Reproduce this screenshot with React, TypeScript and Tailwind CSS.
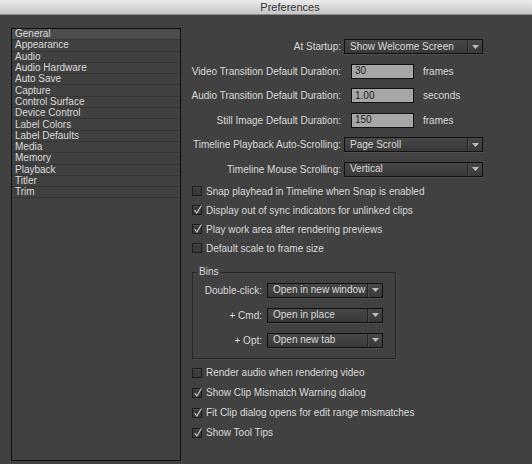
import React from 'react';

const categories = [
  'General',
  'Appearance',
  'Audio',
  'Audio Hardware',
  'Auto Save',
  'Capture',
  'Control Surface',
  'Device Control',
  'Label Colors',
  'Label Defaults',
  'Media',
  'Memory',
  'Playback',
  'Titler',
  'Trim',
];

const Dropdown: React.FC<{ value: string; width: string }> = ({ value, width }) => (
  <div
    className={`flex h-[15px] items-center border border-[#111] bg-gradient-to-b from-[#474747] to-[#393939] shadow-[0_1px_0_#4e4e4e] ${width}`}
  >
    <span className="flex-1 truncate pl-[5px] text-[10px] leading-none text-[#dadada]">{value}</span>
    <span className="h-full w-px bg-[#262626]" />
    <span className="h-full w-px bg-[#4c4c4c]" />
    <span className="flex w-[13px] items-center justify-center">
      <svg width="7" height="4" viewBox="0 0 7 4">
        <path d="M0 0 H7 L3.5 4 Z" fill="#bdbdbd" />
      </svg>
    </span>
  </div>
);

const NumberField: React.FC<{ value: string; unit: string }> = ({ value, unit }) => (
  <div className="ml-[7px] flex items-center">
    <div className="flex h-[15px] w-[63px] items-center border border-[#111] bg-[#a6a6a6] pl-[3px] text-[10px] leading-none text-[#1e1e1e]">
      {value}
    </div>
    <span className="ml-[9px] whitespace-nowrap text-[10px] text-[#dadada]">{unit}</span>
  </div>
);

const Checkbox: React.FC<{ label: string; checked?: boolean; tall?: boolean }> = ({ label, checked, tall }) => (
  <div className={`flex items-center ${tall ? 'h-[20px]' : 'h-[19px]'}`}>
    <div className="relative h-[10px] w-[10px] shrink-0 border border-[#1c1c1c] bg-[#3a3a3a] shadow-[inset_0_1px_0_#4a4a4a]">
      {checked && (
        <svg className="absolute -top-[1px] left-0" width="10" height="10" viewBox="0 0 10 10">
          <path d="M1.5 5 L3.8 8 L8.5 0.5" fill="none" stroke="#c8c8c8" strokeWidth="1.2" />
        </svg>
      )}
    </div>
    <span className="ml-[4px] whitespace-nowrap text-[10px] text-[#dadada]">{label}</span>
  </div>
);

const Label: React.FC<{ children: React.ReactNode }> = ({ children }) => (
  <div className="flex justify-end">
    <span className="whitespace-nowrap text-[10px] text-[#dadada]">{children}</span>
  </div>
);

export default function App() {
  return (
    <div
      className="flex h-[464px] w-[532px] flex-col overflow-hidden bg-[#414141]"
      style={{ fontFamily: '"Liberation Sans", Arial, sans-serif' }}
    >
      <div className="flex h-[15px] shrink-0 items-center justify-center border-b border-[#8c8c8c] bg-gradient-to-b from-[#ececec] to-[#c4c4c4] pl-[48px] text-[11px] leading-none text-[#333]">
        Preferences
      </div>

      <div className="flex flex-1">
        <div className="ml-[11px] mt-[13px] h-[433px] w-[170px] shrink-0 border border-[#0e0e0e] bg-[#404040]">
          {categories.map((c, i) => (
            <div
              key={c}
              className={`flex h-[11.3px] items-center border-b border-[#363636] pl-[3px] text-[10px] leading-none text-[#dadada] ${
                i === 0 ? 'bg-[#4c4c4c]' : ''
              }`}
            >
              {c}
            </div>
          ))}
        </div>

        <div className="ml-[11px] flex flex-col pt-[24px]">
          <div className="grid grid-cols-[149px_auto] items-center gap-x-[3px] gap-y-[9.5px]">
            <Label>At Startup:</Label>
            <Dropdown value="Show Welcome Screen" width="w-[139px]" />
            <Label>Video Transition Default Duration:</Label>
            <NumberField value="30" unit="frames" />
            <Label>Audio Transition Default Duration:</Label>
            <NumberField value="1.00" unit="seconds" />
            <Label>Still Image Default Duration:</Label>
            <NumberField value="150" unit="frames" />
            <Label>Timeline Playback Auto-Scrolling:</Label>
            <Dropdown value="Page Scroll" width="w-[139px]" />
            <Label>Timeline Mouse Scrolling:</Label>
            <Dropdown value="Vertical" width="w-[139px]" />
          </div>

          <div className="mt-[5px] flex flex-col">
            <Checkbox label="Snap playhead in Timeline when Snap is enabled" />
            <Checkbox label="Display out of sync indicators for unlinked clips" checked />
            <Checkbox label="Play work area after rendering previews" checked />
            <Checkbox label="Default scale to frame size" />
          </div>

          <div className="relative mt-[14px] h-[87px] w-[204px] border border-[#262626] pt-[10px] shadow-[1px_1px_0_#4a4a4a]">
            <span className="absolute -top-[7px] left-[4px] bg-[#414141] px-[2px] text-[10px] leading-[12px] text-[#dadada]">
              Bins
            </span>
            <div className="grid grid-cols-[69px_auto] items-center gap-x-[5px] gap-y-[10px]">
              <Label>Double-click:</Label>
              <Dropdown value="Open in new window" width="w-[116px]" />
              <Label>+ Cmd:</Label>
              <Dropdown value="Open in place" width="w-[116px]" />
              <Label>+ Opt:</Label>
              <Dropdown value="Open new tab" width="w-[116px]" />
            </div>
          </div>

          <div className="mt-[4px] flex flex-col">
            <Checkbox label="Render audio when rendering video" tall />
            <Checkbox label="Show Clip Mismatch Warning dialog" checked tall />
            <Checkbox label="Fit Clip dialog opens for edit range mismatches" checked tall />
            <Checkbox label="Show Tool Tips" checked tall />
          </div>
        </div>
      </div>
    </div>
  );
}
